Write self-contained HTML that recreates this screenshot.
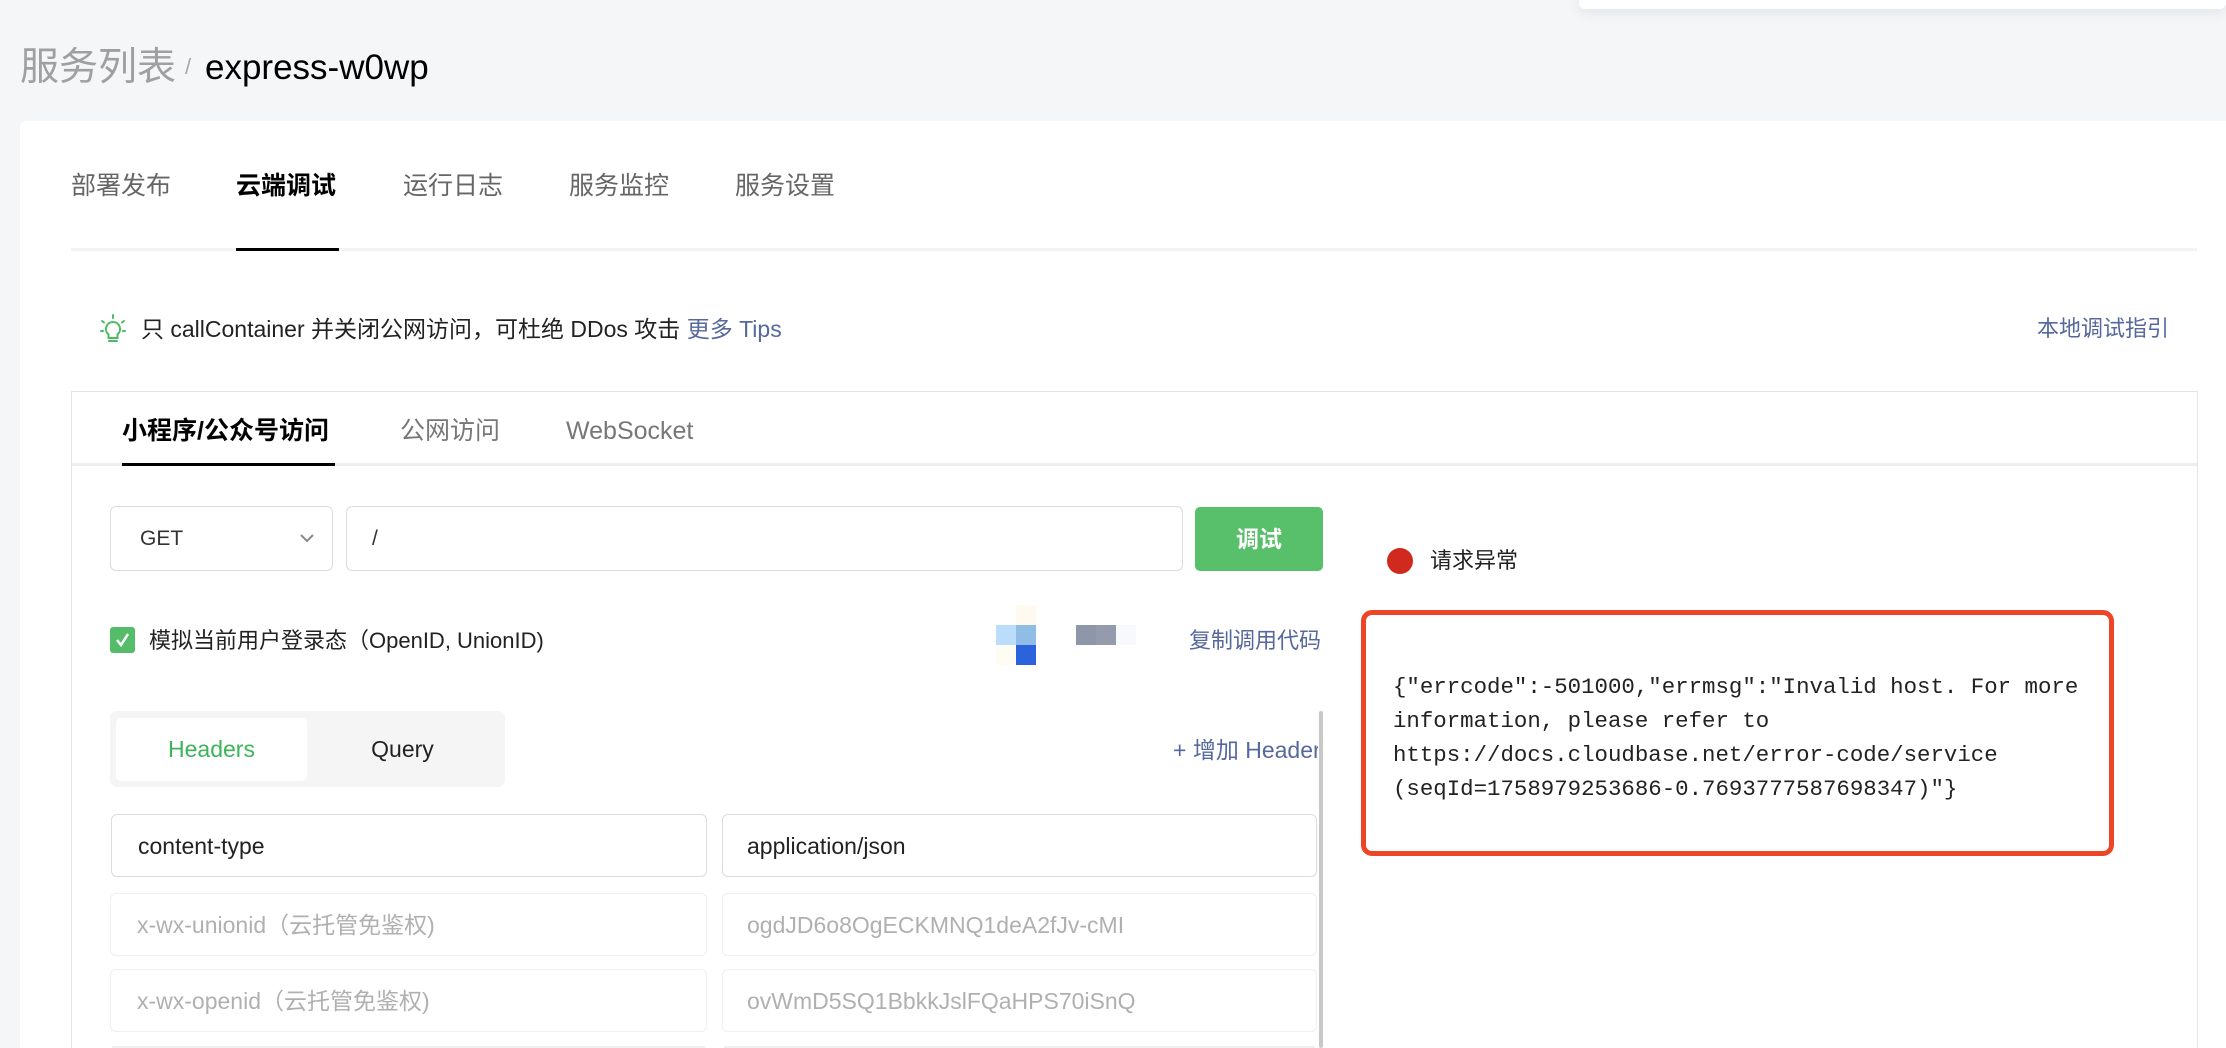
<!DOCTYPE html>
<html><head><meta charset="utf-8"><style>
*{margin:0;padding:0;box-sizing:border-box}
html,body{width:2226px;height:1048px;overflow:hidden}
body{background:#f5f6f8;font-family:"Liberation Sans","Noto Sans CJK SC",sans-serif;color:#333}
#w{position:relative;width:2226px;height:1048px;overflow:hidden}
.a{position:absolute;white-space:nowrap}
.topbox{left:1579px;top:-10px;width:647px;height:19px;background:#fff;border-radius:6px;box-shadow:0 4px 14px rgba(0,0,0,.08)}
.card{left:20px;top:121px;width:2206px;height:927px;background:#fff;border-radius:6px 0 0 0}
.tab{top:168px;font-size:25px;color:#666;line-height:36px}
.panel{left:71px;top:391px;width:2127px;height:657px;border:1px solid #e3e3e3;border-bottom:none}
.box{border:1.5px solid #dcdcdc;border-radius:6px;background:#fff}
.row{border:1.5px solid #efefef;border-radius:6px;background:#fff}
.link{color:#56689c}
.pix{position:absolute;width:20px;height:20px}
.t{font-size:23px;line-height:28px}
</style></head><body><div id="w">
<div class="a topbox"></div>
<div class="a" style="left:20px;top:44px;font-size:39px;color:#a0a0a0;line-height:48px">服务列表</div>
<div class="a" style="left:185px;top:54px;font-size:22px;color:#aaa">/</div>
<div class="a" style="left:205px;top:46px;font-size:35px;color:#000;line-height:44px">express-w0wp</div>

<div class="a card"></div>
<div class="a tab" style="left:71px">部署发布</div>
<div class="a tab" style="left:236px;color:#000;font-weight:bold">云端调试</div>
<div class="a tab" style="left:403px">运行日志</div>
<div class="a tab" style="left:569px">服务监控</div>
<div class="a tab" style="left:735px">服务设置</div>
<div class="a" style="left:71px;top:248px;width:2126px;height:3px;background:#f3f3f3"></div>
<div class="a" style="left:236px;top:248px;width:103px;height:3px;background:#000"></div>

<svg class="a" style="left:98px;top:314px" width="30" height="32" viewBox="0 0 30 32" fill="none" stroke="#4cbb62" stroke-width="2" stroke-linecap="round">
<path d="M15 1v3M4 7l2 1.5M26 7l-2 1.5M3 17h2M27 17h-2"/>
<path d="M15 8a7 7 0 0 0-4.5 12.4V24h9v-3.6A7 7 0 0 0 15 8z"/>
<path d="M11 27h8"/></svg>
<div class="a t" style="left:141px;top:315px;color:#222">只 callContainer 并关闭公网访问，可杜绝 DDos 攻击 <span class="link">更多 Tips</span></div>
<div class="a link" style="left:2037px;top:315px;font-size:22px;line-height:28px">本地调试指引</div>

<div class="a panel"></div>
<div class="a" style="left:122px;top:414px;font-size:25px;font-weight:bold;color:#000;line-height:34px">小程序/公众号访问</div>
<div class="a" style="left:400px;top:414px;font-size:25px;color:#777;line-height:34px">公网访问</div>
<div class="a" style="left:566px;top:414px;font-size:25px;color:#777;line-height:34px">WebSocket</div>
<div class="a" style="left:72px;top:463px;width:2125px;height:3px;background:#eee"></div>
<div class="a" style="left:122px;top:463px;width:213px;height:3px;background:#000"></div>

<div class="a box" style="left:110px;top:506px;width:223px;height:65px"></div>
<div class="a" style="left:140px;top:526px;font-size:21px;line-height:26px">GET</div>
<svg class="a" style="left:299px;top:532px" width="16" height="12" viewBox="0 0 16 12"><path d="M2 3l6 6 6-6" fill="none" stroke="#888" stroke-width="2"/></svg>
<div class="a box" style="left:346px;top:506px;width:837px;height:65px"></div>
<div class="a" style="left:372px;top:526px;font-size:21px;line-height:26px">/</div>
<div class="a" style="left:1195px;top:507px;width:128px;height:64px;background:#58bf6b;border-radius:5px;color:#fff;font-size:23px;font-weight:bold;text-align:center;line-height:64px">调试</div>

<div class="a" style="left:110px;top:627px;width:25px;height:26px;background:#55bd69;border-radius:3px"></div>
<svg class="a" style="left:110px;top:627px" width="25" height="26" viewBox="0 0 25 26"><path d="M7 13l4 5 7-11" fill="none" stroke="#fff" stroke-width="2.5"/></svg>
<div class="a" style="left:149px;top:627px;font-size:22px;line-height:28px;color:#222">模拟当前用户登录态（OpenID, UnionID)</div>

<div class="pix" style="left:1016px;top:605px;background:#fffaf0"></div>
<div class="pix" style="left:996px;top:625px;background:#bcdcfb"></div>
<div class="pix" style="left:1016px;top:625px;background:#90bde6"></div>
<div class="pix" style="left:1016px;top:645px;background:#2a63db"></div>
<div class="pix" style="left:996px;top:645px;background:#fffdf3"></div>
<div class="pix" style="left:1076px;top:625px;background:#8e96aa"></div>
<div class="pix" style="left:1096px;top:625px;background:#939bad"></div>
<div class="pix" style="left:1116px;top:625px;background:#f8f9fc"></div>
<div class="a link" style="left:1189px;top:627px;font-size:22px;line-height:28px">复制调用代码</div>

<div class="a" style="left:110px;top:711px;width:395px;height:76px;background:#f5f5f5;border-radius:7px"></div>
<div class="a" style="left:116px;top:718px;width:191px;height:63px;background:#fff;border-radius:5px;color:#3cb55a;font-size:23px;text-align:center;line-height:63px">Headers</div>
<div class="a" style="left:307px;top:718px;width:191px;height:63px;color:#222;font-size:23px;text-align:center;line-height:63px">Query</div>
<div class="a link t" style="left:1173px;top:736px;width:145px;overflow:hidden">+ 增加 Header</div>
<div class="a" style="left:1319px;top:711px;width:4px;height:337px;background:#c8c8c8;border-radius:2px"></div>

<div class="a box" style="left:111px;top:814px;width:596px;height:63px"></div>
<div class="a t" style="left:138px;top:832px;color:#222">content-type</div>
<div class="a box" style="left:722px;top:814px;width:595px;height:63px"></div>
<div class="a t" style="left:747px;top:832px;color:#222">application/json</div>
<div class="a row" style="left:110px;top:893px;width:597px;height:63px"></div>
<div class="a t" style="left:137px;top:911px;color:#b0b0b0">x-wx-unionid（云托管免鉴权)</div>
<div class="a row" style="left:722px;top:893px;width:595px;height:63px"></div>
<div class="a t" style="left:747px;top:911px;color:#b0b0b0">ogdJD6o8OgECKMNQ1deA2fJv-cMI</div>
<div class="a row" style="left:110px;top:969px;width:597px;height:63px"></div>
<div class="a t" style="left:137px;top:987px;color:#b0b0b0">x-wx-openid（云托管免鉴权)</div>
<div class="a row" style="left:722px;top:969px;width:595px;height:63px"></div>
<div class="a t" style="left:747px;top:987px;color:#b0b0b0">ovWmD5SQ1BbkkJslFQaHPS70iSnQ</div>
<div class="a" style="left:112px;top:1046px;width:593px;height:2px;background:#efefef"></div>
<div class="a" style="left:724px;top:1046px;width:591px;height:2px;background:#efefef"></div>

<div class="a" style="left:1387px;top:548px;width:26px;height:26px;border-radius:50%;background:#d0291d"></div>
<div class="a" style="left:1430px;top:547px;font-size:22px;line-height:28px;color:#222">请求异常</div>

<div class="a" style="left:1361px;top:610px;width:753px;height:246px;border:5px solid #ec4527;border-radius:11px"></div>
<div class="a" style="left:1393px;top:670px;font-family:'Liberation Mono','DejaVu Sans Mono',monospace;font-size:22.4px;line-height:34px;color:#222">{"errcode":-501000,"errmsg":"Invalid host. For more<br>information, please refer to<br>https://docs.cloudbase.net/error-code/service<br>(seqId=1758979253686-0.7693777587698347)"}</div>
</div></body></html>
